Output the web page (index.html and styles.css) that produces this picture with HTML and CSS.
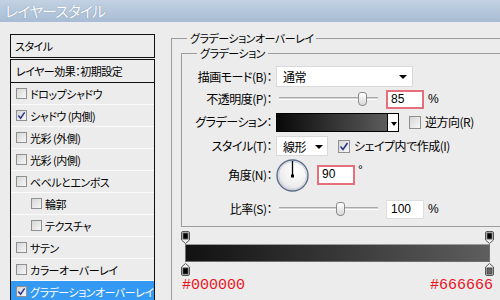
FILE: index.html
```html
<!DOCTYPE html>
<html lang="ja">
<head>
  <meta charset="UTF-8" />
  <title>レイヤースタイル</title>
  <link rel="stylesheet" href="styles.css">
</head>
<body>

  <div class="titlebar">レイヤースタイル</div>

  <div class="dialog">
    <div class="sidebar">
      <div class="side-head">スタイル</div>
      <div class="side-list">
        <div class="side-default">レイヤー効果：初期設定</div>
        <div class="side-row"><span class="cb"></span>ドロップシャドウ</div>
        <div class="side-row"><span class="cb"><svg viewBox="0 0 10 10"><polyline points="1.5,5 4,8 8.5,1.5"/></svg></span>シャドウ (内側)</div>
        <div class="side-row"><span class="cb"></span>光彩 (外側)</div>
        <div class="side-row"><span class="cb"></span>光彩 (内側)</div>
        <div class="side-row"><span class="cb"></span>ベベルとエンボス</div>
        <div class="side-row sub"><span class="cb"></span>輪郭</div>
        <div class="side-row sub"><span class="cb"></span>テクスチャ</div>
        <div class="side-row"><span class="cb"></span>サテン</div>
        <div class="side-row"><span class="cb"></span>カラーオーバーレイ</div>
        <div class="side-row selected"><span class="cb"><svg viewBox="0 0 10 10"><polyline points="1.5,5 4,8 8.5,1.5"/></svg></span>グラデーションオーバーレイ</div>
      </div>
    </div>

    <fieldset class="group outer">
      <legend>グラデーションオーバーレイ</legend>

      <fieldset class="group inner">
        <legend>グラデーション</legend>

        <div class="row r-mode">
          <label class="lbl">描画モード(B)：</label>
          <div class="select mode-select">通常<span class="tri"></span></div>
        </div>

        <div class="row r-opacity">
          <label class="lbl">不透明度(P)：</label>
          <div class="slider"><div class="track"></div><div class="thumb" style="left: 79px"></div></div>
          <div class="field alert">85</div>
          <span class="unit">%</span>
        </div>

        <div class="row r-grad">
          <label class="lbl">グラデーション：</label>
          <div class="swatch"><div class="swatch-fill"></div><div class="swatch-btn"><span class="tri"></span></div></div>
          <span class="cb big"></span>
          <span class="opt">逆方向(R)</span>
        </div>

        <div class="row r-style">
          <label class="lbl">スタイル(T)：</label>
          <div class="select style-select">線形<span class="tri"></span></div>
          <span class="cb big"><svg viewBox="0 0 10 10"><polyline points="1.5,5 4,8 8.5,1.5"/></svg></span>
          <span class="opt">シェイプ内で作成(I)</span>
        </div>

        <div class="row r-angle">
          <label class="lbl">角度(N)：</label>
          <svg class="dial" width="33" height="33" viewBox="0 0 33 33">
            <defs>
              <radialGradient id="dialFill" cx="0.6" cy="0.35" r="0.7">
                <stop offset="0" stop-color="#ffffff"/>
                <stop offset="0.7" stop-color="#eeeeee"/>
                <stop offset="1" stop-color="#d2d4da"/>
              </radialGradient>
            </defs>
            <circle cx="16.5" cy="16.5" r="15.5" fill="url(#dialFill)" stroke="#5f6d8c" stroke-width="1.4"/>
            <circle cx="16.5" cy="16.5" r="14" fill="none" stroke="#c9ced9" stroke-width="1"/>
            <line x1="16.5" y1="17" x2="16.5" y2="2" stroke="#000" stroke-width="1.3"/>
            <rect x="15" y="15.5" width="3" height="3" fill="#000"/>
          </svg>
          <div class="field alert angle">90</div>
          <span class="unit deg">°</span>
        </div>

        <div class="row r-scale">
          <label class="lbl">比率(S)：</label>
          <div class="slider"><div class="track"></div><div class="thumb" style="left: 57px"></div></div>
          <div class="field">100</div>
          <span class="unit">%</span>
        </div>
      </fieldset>

      <div class="grad-editor">
        <svg class="stop top left" width="9" height="13" viewBox="0 0 9 13">
          <path d="M0.5 2 Q0.5 0.5 2 0.5 H7 Q8.5 0.5 8.5 2 V9 L4.5 12.5 L0.5 9 Z" fill="#eeeeee" stroke="#555"/>
          <rect x="1.5" y="1.5" width="6" height="7" fill="#5a5a5a"/>
          <rect x="2.5" y="2.5" width="4" height="5" fill="#000"/>
        </svg>
        <svg class="stop top right" width="9" height="13" viewBox="0 0 9 13">
          <path d="M0.5 2 Q0.5 0.5 2 0.5 H7 Q8.5 0.5 8.5 2 V9 L4.5 12.5 L0.5 9 Z" fill="#eeeeee" stroke="#555"/>
          <rect x="1.5" y="1.5" width="6" height="7" fill="#5a5a5a"/>
          <rect x="2.5" y="2.5" width="4" height="5" fill="#000"/>
        </svg>
        <div class="grad-bar"></div>
        <svg class="stop bottom left" width="9" height="13" viewBox="0 0 9 13">
          <path d="M4.5 0.5 L8.5 4 V11 Q8.5 12.5 7 12.5 H2 Q0.5 12.5 0.5 11 V4 Z" fill="#eeeeee" stroke="#555"/>
          <rect x="1.5" y="4.5" width="6" height="7" fill="#3a3a3a"/>
          <rect x="2.5" y="5.5" width="4" height="5" fill="#000"/>
        </svg>
        <svg class="stop bottom right" width="9" height="13" viewBox="0 0 9 13">
          <path d="M4.5 0.5 L8.5 4 V11 Q8.5 12.5 7 12.5 H2 Q0.5 12.5 0.5 11 V4 Z" fill="#eeeeee" stroke="#555"/>
          <rect x="1.5" y="4.5" width="6" height="7" fill="#444"/>
          <rect x="2.5" y="5.5" width="4" height="5" fill="#666"/>
        </svg>
        <div class="hex-row">
          <span class="hex">#000000</span>
          <span class="hex">#666666</span>
        </div>
      </div>
    </fieldset>
  </div>

</body>
</html>
```

FILE: styles.css
```css
* {
  box-sizing: border-box;
}
html, body {
  width: 500px;
  height: 300px;
  overflow: hidden;
}
body {
  margin: 0;
  background-color: #ececec;
  color: #000;
  font-family: "Noto Sans CJK JP", "Liberation Sans", sans-serif;
  font-size: 12px;
  line-height: 14px;
  font-feature-settings: "palt";
}
.titlebar {
  height: 22px;
  padding-left: 5px;
  background: linear-gradient(#c3d2e3, #a7bcd5);
  color: #fff;
  font-size: 15px;
  letter-spacing: -1px;
  line-height: 22px;
  text-shadow: 0 0 1px rgba(70, 90, 120, 0.7);
}
.dialog {
  display: flex;
  align-items: flex-start;
  padding-left: 10px;
  height: 278px;
  overflow: hidden;
}

/* left style list */
.sidebar {
  width: 145px;
  margin-top: 12px;
  flex-shrink: 0;
  font-size: 11px;
  letter-spacing: -0.5px;
  white-space: nowrap;
}
.side-head {
  height: 24px;
  border: 1px solid #111;
  padding-left: 4px;
  line-height: 22px;
  background: #ececec;
}
.side-list {
  margin-top: 1px;
  border: 1px solid #111;
  border-bottom: none;
  background: #ececec;
}
.side-default {
  height: 23px;
  padding-left: 5px;
  line-height: 22px;
  border-bottom: 1px solid #111;
}
.side-row {
  display: flex;
  align-items: center;
  height: 22px;
  padding-left: 5px;
  border-bottom: 1px solid #fbfbfb;
  overflow: hidden;
}
.side-row.sub {
  padding-left: 20px;
}
.side-row.selected {
  background: #3399f3;
  color: #fff;
  border-bottom-color: #3399f3;
}
.cb {
  display: inline-block;
  width: 11px;
  height: 11px;
  margin-right: 3px;
  border: 1px solid #8e8f8f;
  background: linear-gradient(135deg, #d6d6d6, #f7f7f7);
  flex-shrink: 0;
}
.cb svg {
  display: block;
  width: 9px;
  height: 9px;
}
.cb polyline {
  fill: none;
  stroke: #26348a;
  stroke-width: 1.6;
}
.cb.big {
  width: 12px;
  height: 13px;
  margin-left: 10px;
  margin-right: 4px;
}
.cb.big svg {
  width: 10px;
  height: 11px;
}

/* right group boxes */
.group {
  margin: 0;
  border: 1px solid #9c9c9c;
  min-width: 0;
}
.group legend {
  padding: 0 3px;
  line-height: 14px;
  font-size: 11px;
  letter-spacing: -0.5px;
}
.outer {
  width: 345px;
  height: 270px;
  margin-top: 9px;
  margin-left: 16px;
  padding: 1px 0 0 9px;
  flex-shrink: 0;
}
.outer > legend {
  margin-left: 6px;
}
.inner {
  padding: 5px 0 0 0;
}
.inner > legend {
  margin-left: 15px;
}

.row {
  display: flex;
  align-items: center;
  letter-spacing: -0.5px;
  white-space: nowrap;
}
.r-mode { height: 23px; }
.r-opacity { height: 22px; }
.r-grad { height: 24px; }
.r-style { height: 24px; }
.r-angle { height: 34px; }
.r-scale { height: 34px; }

.lbl {
  width: 90px;
  margin-right: 4px;
  text-align: right;
}
.select {
  position: relative;
  height: 21px;
  padding-left: 6px;
  line-height: 19px;
  background: #fff;
  border: 1px solid #d9d9d9;
}
.mode-select {
  width: 137px;
}
.style-select {
  width: 52px;
  height: 20px;
}
.tri {
  position: absolute;
  right: 5px;
  top: 8px;
  width: 0;
  height: 0;
  border-left: 4px solid transparent;
  border-right: 4px solid transparent;
  border-top: 4px solid #000;
}
.style-select .tri {
  right: 4px;
}

.slider {
  position: relative;
  width: 99px;
  height: 16px;
  margin-left: 3px;
}
.track {
  position: absolute;
  left: 0;
  right: 0;
  top: 6px;
  height: 3px;
  border-top: 1px solid #a9a9a9;
  border-bottom: 1px solid #fff;
  background: #d4d4d4;
}
.thumb {
  position: absolute;
  top: 1px;
  width: 9px;
  height: 14px;
  border: 1px solid #8b8b8b;
  border-radius: 3px 3px 4px 4px;
  background: linear-gradient(#ffffff, #d9d9d9);
}
.field {
  width: 38px;
  height: 19px;
  margin-left: 8px;
  padding-left: 4px;
  background: #fff;
  border: 1px solid #dedede;
  font-family: "Liberation Sans", sans-serif;
  font-size: 12px;
  letter-spacing: 0;
  line-height: 17px;
}
.field.alert {
  border: 2px solid #e5707c;
  padding-left: 3px;
  line-height: 15px;
}
.field.angle {
  height: 20px;
  margin-left: 8px;
}
.unit {
  margin-left: 4px;
  font-family: "Liberation Sans", sans-serif;
  font-size: 12px;
}
.unit.deg {
  align-self: flex-start;
  margin-top: 5px;
  margin-left: 3px;
}
.dial {
  display: block;
}

.swatch {
  display: flex;
  width: 123px;
  height: 19px;
  border: 1px solid #000;
}
.swatch-fill {
  flex: 1;
  background: linear-gradient(to right, #080808, #5c5c5c);
  border-right: 1px solid #000;
}
.swatch-btn {
  position: relative;
  width: 10px;
  background: #fff;
}
.swatch-btn .tri {
  right: 1px;
  top: 8px;
  border-left-width: 3px;
  border-right-width: 3px;
}

/* gradient editor below the group */
.grad-editor {
  position: relative;
  width: 313px;
  padding: 17px 4px 0;
}
.grad-bar {
  height: 18px;
  border: 1px solid #6e6e6e;
  border-top-color: #9a9a9a;
  background: linear-gradient(to right, #111111, #5e5e5e);
}
.stop {
  position: absolute;
  display: block;
}
.stop.top { top: 4px; }
.stop.bottom { top: 36px; }
.stop.left { left: 0; }
.stop.right { right: 0; }
.hex-row {
  display: flex;
  justify-content: space-between;
  margin: 16px -3px 0 -3px;
}
.hex {
  color: #e8131f;
  font-family: "Liberation Mono", monospace;
  font-size: 15px;
  line-height: 16px;
}
```
